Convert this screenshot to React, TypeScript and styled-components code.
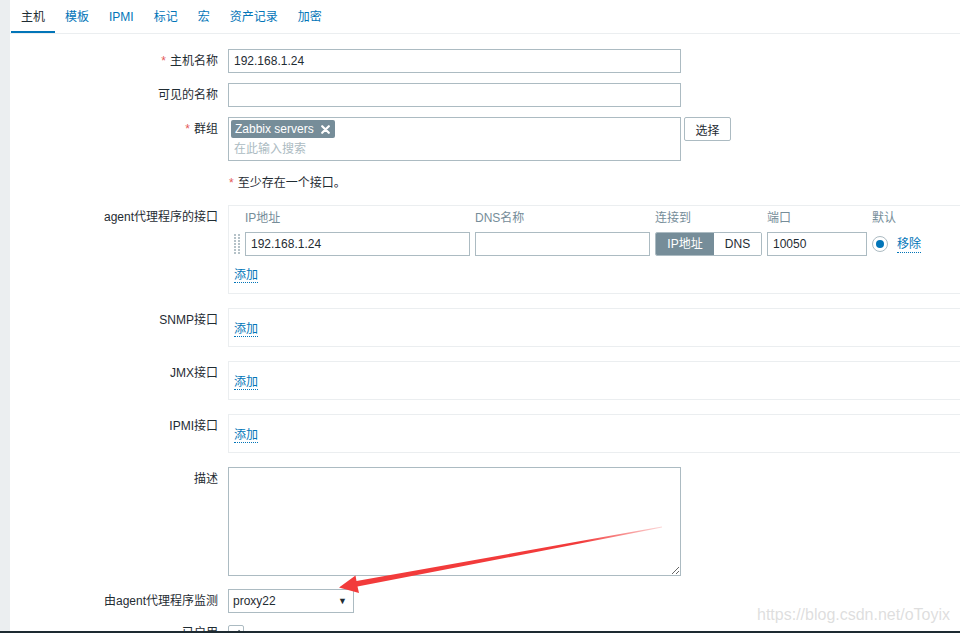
import React from 'react';
import styled, { createGlobalStyle } from 'styled-components';

const colors = {
  text: '#1f2c33',
  link: '#0275b8',
  border: '#acbbc2',
  light: '#ebeef0',
  muted: '#768d99',
  required: '#e45959',
};

const GlobalStyle = createGlobalStyle`
  html, body {
    margin: 0;
    padding: 0;
    background: ${colors.light};
    overflow: hidden;
  }
  body {
    font-family: "Liberation Sans", "Noto Sans CJK SC", sans-serif;
    font-size: 12px;
    color: ${colors.text};
  }
  * { box-sizing: border-box; }
`;

const Page = styled.div`
  position: relative;
  height: 633px;
  padding-left: 10px;
  overflow: hidden;
`;

const Panel = styled.div`
  background: #fff;
  height: 100%;
`;

const TabBar = styled.nav`
  display: flex;
  height: 34px;
  border-bottom: 1px solid ${colors.light};
  padding-left: 1px;
`;

const Tab = styled.span<{ $active?: boolean }>`
  padding: 3px 10px 0;
  line-height: 28px;
  height: 33px;
  color: ${p => (p.$active ? colors.text : colors.link)};
  border-bottom: 2px solid ${p => (p.$active ? colors.link : 'transparent')};
  white-space: nowrap;
`;

const Form = styled.div`
  display: flex;
  flex-direction: column;
  padding-top: 15px;
`;

const Row = styled.div<{ $gap?: number }>`
  display: grid;
  grid-template-columns: 208px 1fr;
  column-gap: 10px;
  margin-bottom: ${p => p.$gap ?? 10}px;
`;

const Label = styled.div<{ $line?: number }>`
  text-align: right;
  line-height: ${p => p.$line ?? 24}px;
  white-space: nowrap;
`;

const Star = styled.span`
  color: ${colors.required};
  margin-right: 4px;
`;

const Field = styled.div`
  display: flex;
  align-items: flex-start;
  gap: 3px;
`;

const TextInput = styled.div<{ $width: number }>`
  width: ${p => p.$width}px;
  height: 24px;
  line-height: 22px;
  padding: 0 5px;
  border: 1px solid ${colors.border};
  background: #fff;
  white-space: nowrap;
`;

const MultiSelect = styled.div`
  width: 453px;
  height: 44px;
  border: 1px solid ${colors.border};
  padding: 2px 2px 0;
`;

const Chip = styled.span`
  display: inline-flex;
  align-items: center;
  gap: 7px;
  height: 18px;
  padding: 0 5px 0 4px;
  background: ${colors.muted};
  color: #fff;
  border-radius: 2px;
  line-height: 18px;
`;

const Placeholder = styled.div`
  color: ${colors.border};
  line-height: 18px;
  padding: 2px 3px;
`;

const Button = styled.button`
  height: 24px;
  width: 47px;
  padding: 0;
  border: 1px solid ${colors.border};
  border-radius: 2px;
  background: #fff;
  color: ${colors.text};
  font: inherit;
`;

const Note = styled.div`
  line-height: 24px;
  padding-left: 1px;
`;

const IfaceBox = styled.div<{ $simple?: boolean }>`
  width: 780px;
  height: ${p => (p.$simple ? 39 : 89)}px;
  border: 1px solid ${colors.light};
  line-height: 18px;
  padding: ${p => (p.$simple ? '11px 5px 0' : '3px 5px 0')};
`;

const IfaceGrid = styled.div`
  display: grid;
  grid-template-columns: 6px 225px 175px 107px 100px auto;
  column-gap: 5px;
  align-items: center;
`;

const ColHead = styled.div`
  color: ${colors.muted};
  line-height: 18px;
  margin-bottom: 5px;
`;

const Handle = styled.svg`
  display: block;
`;

const Segmented = styled.div`
  display: flex;
  height: 24px;
  border: 1px solid ${colors.border};
  border-radius: 2px;
  overflow: hidden;
`;

const Segment = styled.span<{ $active?: boolean }>`
  flex: ${p => (p.$active ? '0 0 58px' : '1')};
  text-align: center;
  line-height: 22px;
  background: ${p => (p.$active ? colors.muted : '#fff')};
  color: ${p => (p.$active ? '#fff' : colors.text)};
`;

const DefaultCell = styled.div`
  display: flex;
  align-items: center;
  gap: 9px;
`;

const Radio = styled.span`
  width: 16px;
  height: 16px;
  border-radius: 50%;
  border: 1px solid ${colors.border};
  display: flex;
  align-items: center;
  justify-content: center;
  &::after {
    content: '';
    width: 8px;
    height: 8px;
    border-radius: 50%;
    background: ${colors.link};
  }
`;

const Link = styled.span`
  color: ${colors.link};
  border-bottom: 1px dotted ${colors.link};
  line-height: 16px;
`;

const AddLine = styled.div<{ $top?: number }>`
  grid-column: 1 / -1;
  margin-top: ${p => p.$top ?? 0}px;
  line-height: 18px;
`;

const TextArea = styled.textarea`
  width: 453px;
  height: 109px;
  border: 1px solid ${colors.border};
  border-radius: 0;
  resize: both;
  font: inherit;
  margin: 0;
  display: block;
`;

const SelectBox = styled.div`
  width: 126px;
  height: 24px;
  border: 1px solid ${colors.border};
  display: flex;
  align-items: center;
  justify-content: space-between;
  padding: 0 6px 0 4px;
  line-height: 22px;
`;

const Caret = styled.span`
  font-size: 9px;
`;

const Checkbox = styled.span`
  display: flex;
  align-items: center;
  justify-content: center;
  width: 16px;
  height: 16px;
  border: 1px solid ${colors.border};
  border-radius: 2px;
`;

const Watermark = styled.div`
  position: absolute;
  right: 10px;
  bottom: 9px;
  font-size: 16px;
  color: rgba(200, 200, 200, 0.6);
  font-family: "Liberation Sans", sans-serif;
`;

const ScreenEdge = styled.div`
  position: absolute;
  left: 0;
  right: 0;
  bottom: 0;
  height: 2px;
  background: #1d2a31;
`;

const Annotation = styled.svg`
  position: absolute;
  left: 0;
  top: 0;
  pointer-events: none;
`;

const tabs = ['主机', '模板', 'IPMI', '标记', '宏', '资产记录', '加密'];

const DragHandle = () => (
  <Handle width="6" height="20" viewBox="0 0 6 20">
    {[0, 1, 2, 3, 4, 5, 6].map(i => (
      <React.Fragment key={i}>
        <rect x="0" y={i * 3} width="2" height="2" fill="#b5c2c8" />
        <rect x="4" y={i * 3} width="2" height="2" fill="#b5c2c8" />
      </React.Fragment>
    ))}
  </Handle>
);

const CloseIcon = () => (
  <svg width="9" height="9" viewBox="0 0 9 9">
    <path d="M1.2 1.2 L7.8 7.8 M7.8 1.2 L1.2 7.8" stroke="#fff" strokeWidth="2.2" strokeLinecap="round" />
  </svg>
);

const CheckMark = () => (
  <svg width="10" height="10" viewBox="0 0 10 10">
    <path d="M1.5 5.2 L4 7.6 L8.6 2.2" stroke="#4f5f68" strokeWidth="1.6" fill="none" />
  </svg>
);

const SimpleIface = ({ label }: { label: string }) => (
  <Row $gap={14}>
    <Label>{label}</Label>
    <IfaceBox $simple>
      <Link>添加</Link>
    </IfaceBox>
  </Row>
);

const App = () => {
  return (
    <>
      <GlobalStyle />
      <Page>
        <Panel>
          <TabBar>
            {tabs.map((t, i) => (
              <Tab key={t} $active={i === 0}>{t}</Tab>
            ))}
          </TabBar>

          <Form>
            <Row>
              <Label><Star>*</Star>主机名称</Label>
              <TextInput $width={453}>192.168.1.24</TextInput>
            </Row>
            <Row>
              <Label>可见的名称</Label>
              <TextInput $width={453} />
            </Row>
            <Row>
              <Label><Star>*</Star>群组</Label>
              <Field>
                <MultiSelect>
                  <Chip>Zabbix servers <CloseIcon /></Chip>
                  <Placeholder>在此输入搜索</Placeholder>
                </MultiSelect>
                <Button>选择</Button>
              </Field>
            </Row>
            <Row>
              <Label />
              <Note><Star>*</Star>至少存在一个接口。</Note>
            </Row>

            <Row $gap={14}>
              <Label>agent代理程序的接口</Label>
              <IfaceBox>
                <IfaceGrid>
                  <span />
                  <ColHead>IP地址</ColHead>
                  <ColHead>DNS名称</ColHead>
                  <ColHead>连接到</ColHead>
                  <ColHead>端口</ColHead>
                  <ColHead>默认</ColHead>

                  <DragHandle />
                  <TextInput $width={225}>192.168.1.24</TextInput>
                  <TextInput $width={175} />
                  <Segmented>
                    <Segment $active>IP地址</Segment>
                    <Segment>DNS</Segment>
                  </Segmented>
                  <TextInput $width={100}>10050</TextInput>
                  <DefaultCell>
                    <Radio />
                    <Link>移除</Link>
                  </DefaultCell>

                  <AddLine $top={10}><Link>添加</Link></AddLine>
                </IfaceGrid>
              </IfaceBox>
            </Row>

            <SimpleIface label="SNMP接口" />
            <SimpleIface label="JMX接口" />
            <SimpleIface label="IPMI接口" />

            <Row $gap={13}>
              <Label>描述</Label>
              <TextArea />
            </Row>
            <Row $gap={12}>
              <Label>由agent代理程序监测</Label>
              <SelectBox>
                <span>proxy22</span>
                <Caret>▼</Caret>
              </SelectBox>
            </Row>
            <Row>
              <Label $line={16}>已启用</Label>
              <Checkbox><CheckMark /></Checkbox>
            </Row>
          </Form>
        </Panel>

        <Annotation width="960" height="633" viewBox="0 0 960 633">
          <defs>
            <linearGradient id="tail" x1="339" y1="587" x2="662" y2="527" gradientUnits="userSpaceOnUse">
              <stop offset="0" stopColor="#f23b3b" />
              <stop offset="0.75" stopColor="#f23b3b" />
              <stop offset="1" stopColor="#f23b3b" stopOpacity="0.2" />
            </linearGradient>
          </defs>
          <polygon
            points="339,587.5 355.5,575.5 356.5,581 662,526.6 662,527.6 357.5,586.5 359,593"
            fill="url(#tail)"
          />
        </Annotation>

        <Watermark>https://blog.csdn.net/oToyix</Watermark>
        <ScreenEdge />
      </Page>
    </>
  );
};

export default App;
